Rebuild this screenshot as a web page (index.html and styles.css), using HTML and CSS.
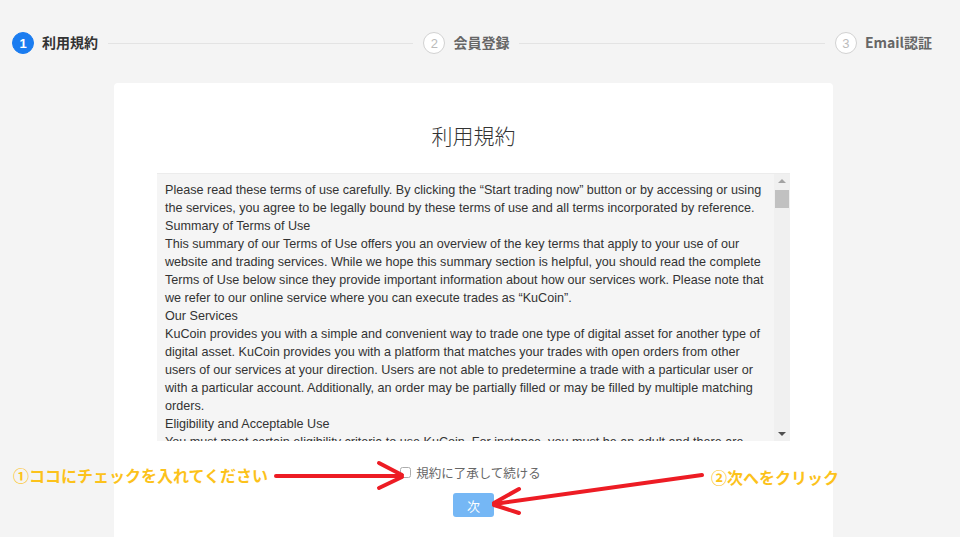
FILE: index.html
```html
<!DOCTYPE html>
<html lang="ja">
<head>
    <meta charset="UTF-8">
    <meta name="viewport" content="width=device-width, initial-scale=1.0">
    <title>利用規約</title>
    <link rel="stylesheet" href="styles.css">
</head>
<body>
    <div class="steps">
        <div class="step active">
            <span class="step-num">1</span>
            <span class="step-label">利用規約</span>
        </div>
        <div class="step-line"></div>
        <div class="step">
            <span class="step-num">2</span>
            <span class="step-label">会員登録</span>
        </div>
        <div class="step-line"></div>
        <div class="step">
            <span class="step-num">3</span>
            <span class="step-label">Email認証</span>
        </div>
    </div>

    <div class="card">
        <h2 class="card-title">利用規約</h2>

        <div class="terms">
            <div class="terms-text">
                <p>Please read these terms of use carefully. By clicking the “Start trading now” button or by accessing or using the services, you agree to be legally bound by these terms of use and all terms incorporated by reference.</p>
                <p>Summary of Terms of Use</p>
                <p>This summary of our Terms of Use offers you an overview of the key terms that apply to your use of our website and trading services. While we hope this summary section is helpful, you should read the complete Terms of Use below since they provide important information about how our services work. Please note that we refer to our online service where you can execute trades as “KuCoin”.</p>
                <p>Our Services</p>
                <p>KuCoin provides you with a simple and convenient way to trade one type of digital asset for another type of digital asset. KuCoin provides you with a platform that matches your trades with open orders from other users of our services at your direction. Users are not able to predetermine a trade with a particular user or with a particular account. Additionally, an order may be partially filled or may be filled by multiple matching orders.</p>
                <p>Eligibility and Acceptable Use</p>
                <p>You must meet certain eligibility criteria to use KuCoin. For instance, you must be an adult and there are some locations from which you may not use KuCoin. There are also certain things you may not do when using KuCoin, such as engaging in illegal activities, lying, or doing anything that may harm KuCoin or other users.</p>
            </div>
            <div class="scrollbar">
                <span class="scroll-up"></span>
                <span class="scroll-thumb"></span>
                <span class="scroll-down"></span>
            </div>
        </div>

        <label class="agree">
            <input type="checkbox" class="agree-box">
            <span>規約に了承して続ける</span>
        </label>

        <div class="actions">
            <button class="btn-next" disabled>次</button>
        </div>
    </div>

    <!-- annotations drawn over the screenshot -->
    <div class="notes">
        <span class="note note-1">①ココにチェックを入れてください</span>
        <span class="note note-2">②次へをクリック</span>
        <svg class="note-arrows" width="960" height="537" viewBox="0 0 960 537">
            <g stroke="#ed1c24" stroke-width="4" stroke-linecap="round" fill="none">
                <line x1="276" y1="476" x2="401" y2="476"/>
                <line x1="379" y1="463" x2="402" y2="475"/>
                <line x1="379" y1="488" x2="402" y2="477"/>
                <line x1="702" y1="475" x2="494" y2="504"/>
                <line x1="519" y1="489" x2="494" y2="503"/>
                <line x1="519" y1="513" x2="494" y2="505"/>
            </g>
        </svg>
    </div>
</body>
</html>
```

FILE: styles.css
```css
body {
    margin: 0;
    background-color: #f4f4f4;
    font-family: "Liberation Sans", Arial, "Noto Sans CJK JP", sans-serif;
    color: #333;
    height: 537px;
    overflow: hidden;
    position: relative;
}
.steps {
    display: flex;
    align-items: center;
    padding: 32px 28px 0 12px;
    height: 22px;
}
.step {
    display: flex;
    align-items: center;
    gap: 8px;
}
.step-num {
    width: 20px;
    height: 20px;
    border: 1px solid #d2d2d2;
    border-radius: 50%;
    display: flex;
    align-items: center;
    justify-content: center;
    font-size: 13px;
    color: #bbb;
    background-color: #fff;
}
.step-label {
    font-family: "Noto Sans CJK JP", sans-serif;
    font-size: 14px;
    font-weight: bold;
    color: #666;
    margin-top: -2px;
}
.step.active .step-num {
    background-color: #1a7cf0;
    border-color: #1a7cf0;
    color: #fff;
    font-weight: bold;
}
.step.active .step-label {
    color: #333;
}
.step-line {
    flex: 1;
    height: 1px;
    background-color: #e3e3e3;
    margin: 0 10px;
}
.card {
    width: 719px;
    margin: 29px 0 0 114px;
    background-color: #fff;
    border-radius: 4px;
    padding: 37px 0 40px;
    min-height: 500px;
    box-sizing: border-box;
}
.card-title {
    margin: 0 0 23px;
    text-align: center;
    font-family: "Noto Sans CJK JP", sans-serif;
    font-size: 21px;
    font-weight: 300;
    line-height: 30px;
    color: #333;
}
.terms {
    display: flex;
    margin: 0 43px;
    height: 268px;
    box-sizing: border-box;
    background-color: #f5f5f5;
    border-top: 1px solid #ececec;
}
.terms-text {
    flex: 1;
    overflow: hidden;
    padding: 7px 8px 5px;
    font-size: 12.6px;
    line-height: 18px;
    color: #333;
}
.terms-text p {
    margin: 0;
}
.scrollbar {
    width: 16px;
    position: relative;
    background-color: #f0f0f0;
}
.scroll-up,
.scroll-down {
    position: absolute;
    left: 4px;
    width: 0;
    height: 0;
    border-left: 4px solid transparent;
    border-right: 4px solid transparent;
}
.scroll-up {
    top: 5px;
    border-bottom: 4px solid #a3a3a3;
}
.scroll-down {
    bottom: 5px;
    border-top: 4px solid #505050;
}
.scroll-thumb {
    position: absolute;
    left: 1px;
    right: 1px;
    top: 16px;
    height: 18px;
    background-color: #c1c1c1;
}
.agree {
    display: flex;
    align-items: center;
    justify-content: center;
    gap: 5px;
    margin-top: 22px;
    height: 18px;
    font-family: "Noto Sans CJK JP", sans-serif;
    font-size: 12.5px;
    color: #666;
    margin-left: -6px;
}
.agree-box {
    width: 11px;
    height: 11px;
    margin: 0;
    opacity: 0.6;
}
.actions {
    display: flex;
    justify-content: center;
    margin-top: 12px;
}
.btn-next {
    width: 41px;
    height: 24px;
    border: none;
    border-radius: 3px;
    background-color: #75b7f5;
    color: #fff;
    font-family: "Noto Sans CJK JP", sans-serif;
    font-size: 13px;
    padding: 0;
}
.notes {
    position: absolute;
    inset: 0;
    pointer-events: none;
}
.note {
    position: absolute;
    font-family: "Noto Sans CJK JP", sans-serif;
    font-size: 16px;
    font-weight: bold;
    color: #fcc21b;
    line-height: 20px;
    white-space: nowrap;
}
.note-1 {
    left: 13px;
    top: 465px;
}
.note-2 {
    left: 711px;
    top: 467px;
}
.note-arrows {
    position: absolute;
    left: 0;
    top: 0;
}
```
